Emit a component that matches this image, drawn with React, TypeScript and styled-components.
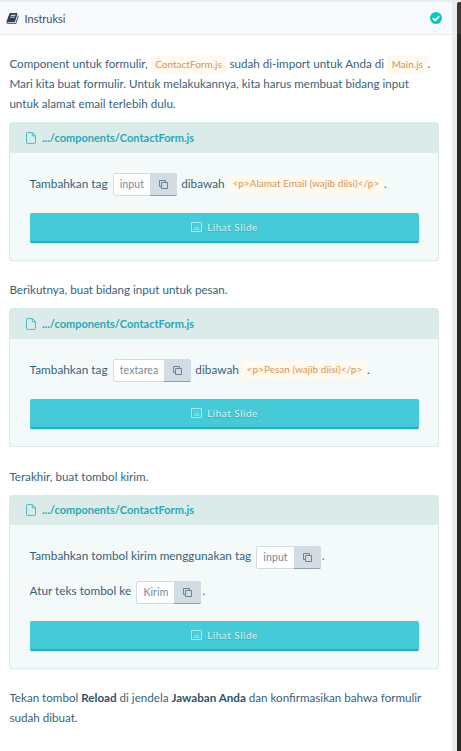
import React from "react";
import styled, { createGlobalStyle } from "styled-components";

const GlobalStyle = createGlobalStyle`
  * { box-sizing: border-box; }
  body { margin: 0; background: #e9edf0; font-family: Lato, sans-serif; overflow: hidden; }
`;

const Screen = styled.div`
  display: flex;
  gap: 5px;
  height: 751px;
  width: 461px;
  padding-top: 2px;
  overflow: hidden;
`;

const Panel = styled.section`
  width: 452px;
  flex: none;
  background: #fff;
  border-top-right-radius: 3px;
  overflow: hidden;
`;

const PanelHeader = styled.header`
  height: 33px;
  display: flex;
  align-items: center;
  padding: 0 10px 0 6px;
  background: #f8f9fd;
  border-bottom: 1px solid #e8ebef;
  color: #3f4e63;
  font-size: 11px;
`;

const PanelTitle = styled.span`
  flex: 1;
  margin-left: 5.5px;
  line-height: 16px;
  padding-top: 2px;
`;

const Editor = styled.aside`
  flex: 1;
  background: #272822;
  border-top-left-radius: 3px;
  overflow: hidden;
`;

const EditorTab = styled.div`
  height: 32px;
  background: #3c3836;
`;

const Content = styled.main`
  padding: 19px 13px 0 9px;
`;

const Paragraph = styled.p`
  margin: 0 0 8.1px;
  padding-left: 0.4px;
  font-size: 11.64px;
  line-height: 20px;
  color: #3a5f78;
  white-space: nowrap;
  strong { color: #2f5369; }
`;

const Code = styled.code`
  display: inline-block;
  height: 18px;
  line-height: 17px;
  padding: 0 4.7px;
  border-radius: 4px;
  background: #fff9ee;
  color: #d3965a;
  font-family: Lato, sans-serif;
  font-size: 10px;
`;

const Card = styled.article`
  width: 430px;
  margin-bottom: 19.2px;
  border: 1px solid #daebea;
  border-radius: 3px;
  background: #f4fafa;
  overflow: hidden;
`;

const CardHeader = styled.h2`
  display: flex;
  align-items: center;
  gap: 6px;
  height: 29.7px;
  margin: 0;
  padding: 0 16px;
  background: #daebea;
  color: #2aa9b5;
  font-size: 11px;
  font-weight: 700;
`;

const FileName = styled.span`
  margin-top: -1.5px;
`;

const CardBody = styled.div`
  padding: 14.3px 19px 17px 20px;
`;

const Step = styled.div`
  display: flex;
  align-items: center;
  height: 35px;
  margin-left: -0.4px;
  color: #3a5f78;
  font-size: 11.8px;
  white-space: pre;
`;

const StepText = styled.span`
  margin-top: -2.7px;
`;

const StepCode = styled(Code)`
  font-size: 10.05px;
  line-height: 16px;
  margin-top: -1px;
`;

const CopyBox = styled.span`
  display: inline-flex;
  height: 23px;
  margin: 0 1px 0 5.2px;
  border: 1px solid #d3dbe3;
  border-radius: 2px;
  background: #fff;
  color: #79889a;
  font-size: 10.5px;
  letter-spacing: 0.1px;
  line-height: 21px;
`;

const CopyText = styled.span`
  padding: 0 6px;
`;

const CopyButton = styled.button`
  display: flex;
  align-items: center;
  justify-content: center;
  width: 27px;
  height: 22px;
  margin: 0 -1px -1px 0;
  padding: 0;
  border: 0;
  border-bottom: 1px solid #8f9fb2;
  border-radius: 0 0 2px 0;
  background: #d3dbe3;
  color: #6d8399;
`;

const SlideButton = styled.button`
  display: flex;
  align-items: center;
  justify-content: center;
  gap: 5px;
  width: 389px;
  height: 30px;
  margin-top: 11px;
  padding: 0;
  border: 0;
  border-bottom: 2px solid #29adbd;
  border-radius: 2px;
  background: #46cad7;
  color: #d9f5f6;
  font: 10px Lato, sans-serif;
  letter-spacing: 0.5px;
  text-shadow: 0 1px 1px rgba(20, 110, 125, 0.35);
  box-shadow: 0 1px 0 rgba(70, 202, 215, 0.3);
`;

const BookIcon = () => (
  <svg width="13" height="13" viewBox="0 0 1792 1792" fill="#2d3e50">
    <path d="M1703 478q40 57 18 129l-275 906q-19 64-76.5 107.5t-122.5 43.5h-923q-77 0-148.5-53.5t-99.5-131.5q-24-67-2-127 0-4 3-27t4-37q1-8-3-21.5t-3-19.5q2-11 8-21t16.5-23.5 16.5-23.5q23-38 45-91.5t30-91.5q3-10 .5-30t-.5-28q3-11 17-28t17-23q21-36 42-92t25-90q1-9-2.5-32t.5-28q4-13 22-30.5t22-22.5q19-26 42.5-84.5t27.5-96.5q1-8-3-25.5t-2-26.5q2-8 9-18t18-23 17-21q8-12 16.5-30.5t15-35 16-36 19.5-32 26.5-23.5 36-11.5 47.5 5.5l-1 3q38-9 51-9h761q74 0 114 56t18 130l-274 906q-36 119-71.5 153.5t-128.5 34.5h-869q-27 0-38 15-11 16-1 43 24 70 144 70h923q29 0 56-15.5t35-41.5l300-987q7-22 5-57 38 15 59 43zm-1064 2q-4 13 2 22.5t20 9.5h608q13 0 25.5-9.5t16.5-22.5l21-64q4-13-2-22.5t-20-9.5h-608q-13 0-25.5 9.5t-16.5 22.5zm-83 256q-4 13 2 22.5t20 9.5h608q13 0 25.5-9.5t16.5-22.5l21-64q4-13-2-22.5t-20-9.5h-608q-13 0-25.5 9.5t-16.5 22.5z" />
  </svg>
);

const DoneIcon = () => (
  <svg width="12" height="12" viewBox="0 0 12 12">
    <circle cx="6" cy="6" r="6" fill="#05c9b8" />
    <path d="M2.8 6.2 5.1 8.4 9.3 4.2" fill="none" stroke="#fff" strokeWidth="1.8" />
  </svg>
);

const FileIcon = () => (
  <svg width="10" height="12" viewBox="0 0 10 12" fill="none" stroke="#4bb9c3">
    <path d="M1.2.6h5.3l3 3v6.9q0 .9-.9.9H1.4q-.9 0-.9-.9V1.5q0-.9.7-.9ZM6.3.8v3h3" />
  </svg>
);

const CopyIcon = () => (
  <svg width="9" height="9" viewBox="0 0 9 9" fill="none" stroke="currentColor">
    <path d="M2 6.5H.5v-6h6V2M2.5 2.5h6v6h-6Z" />
  </svg>
);

const SlideIcon = () => (
  <svg width="11" height="10" viewBox="0 0 11 10" fill="none" stroke="#a9eaee">
    <path d="M.5.5h10v9H.5Z" />
    <path d="M2.8 7.2 4.7 4.8l1.4 1.5 1-.9 1.3 1.8H2.8M3 2.8h1M6.5 3.4h1.4" strokeWidth=".8" />
  </svg>
);

const Copyable = ({ text }: { text: string }) => (
  <CopyBox>
    <CopyText>{text}</CopyText>
    <CopyButton aria-label="Salin"><CopyIcon /></CopyButton>
  </CopyBox>
);

const TaskCard = ({ children }: { children: React.ReactNode }) => (
  <Card>
    <CardHeader><FileIcon /><FileName>.../components/ContactForm.js</FileName></CardHeader>
    <CardBody>
      {children}
      <SlideButton><SlideIcon />Lihat Slide</SlideButton>
    </CardBody>
  </Card>
);

export default function App() {
  return (
    <>
      <GlobalStyle />
      <Screen>
        <Panel>
          <PanelHeader>
            <BookIcon />
            <PanelTitle>Instruksi</PanelTitle>
            <DoneIcon />
          </PanelHeader>
          <Content>
            <Paragraph>
              Component untuk formulir, <Code>ContactForm.js</Code> sudah di-import untuk Anda di <Code>Main.js</Code>.<br />
              Mari kita buat formulir. Untuk melakukannya, kita harus membuat bidang input<br />
              untuk alamat email terlebih dulu.
            </Paragraph>
            <TaskCard>
              <Step>
                <StepText>Tambahkan tag</StepText><Copyable text="input" /><StepText> dibawah </StepText>
                <StepCode>{"<p>Alamat Email (wajib diisi)</p>"}</StepCode><StepText>.</StepText>
              </Step>
            </TaskCard>
            <Paragraph>Berikutnya, buat bidang input untuk pesan.</Paragraph>
            <TaskCard>
              <Step>
                <StepText>Tambahkan tag</StepText><Copyable text="textarea" /><StepText> dibawah </StepText>
                <StepCode>{"<p>Pesan (wajib diisi)</p>"}</StepCode><StepText>.</StepText>
              </Step>
            </TaskCard>
            <Paragraph>Terakhir, buat tombol kirim.</Paragraph>
            <TaskCard>
              <Step>
                <StepText>Tambahkan tombol kirim menggunakan tag</StepText><Copyable text="input" /><StepText>.</StepText>
              </Step>
              <Step>
                <StepText>Atur teks tombol ke</StepText><Copyable text="Kirim" /><StepText>.</StepText>
              </Step>
            </TaskCard>
            <Paragraph>
              Tekan tombol <strong>Reload</strong> di jendela <strong>Jawaban Anda</strong> dan konfirmasikan bahwa formulir<br />
              sudah dibuat.
            </Paragraph>
          </Content>
        </Panel>
        <Editor><EditorTab /></Editor>
      </Screen>
    </>
  );
}
